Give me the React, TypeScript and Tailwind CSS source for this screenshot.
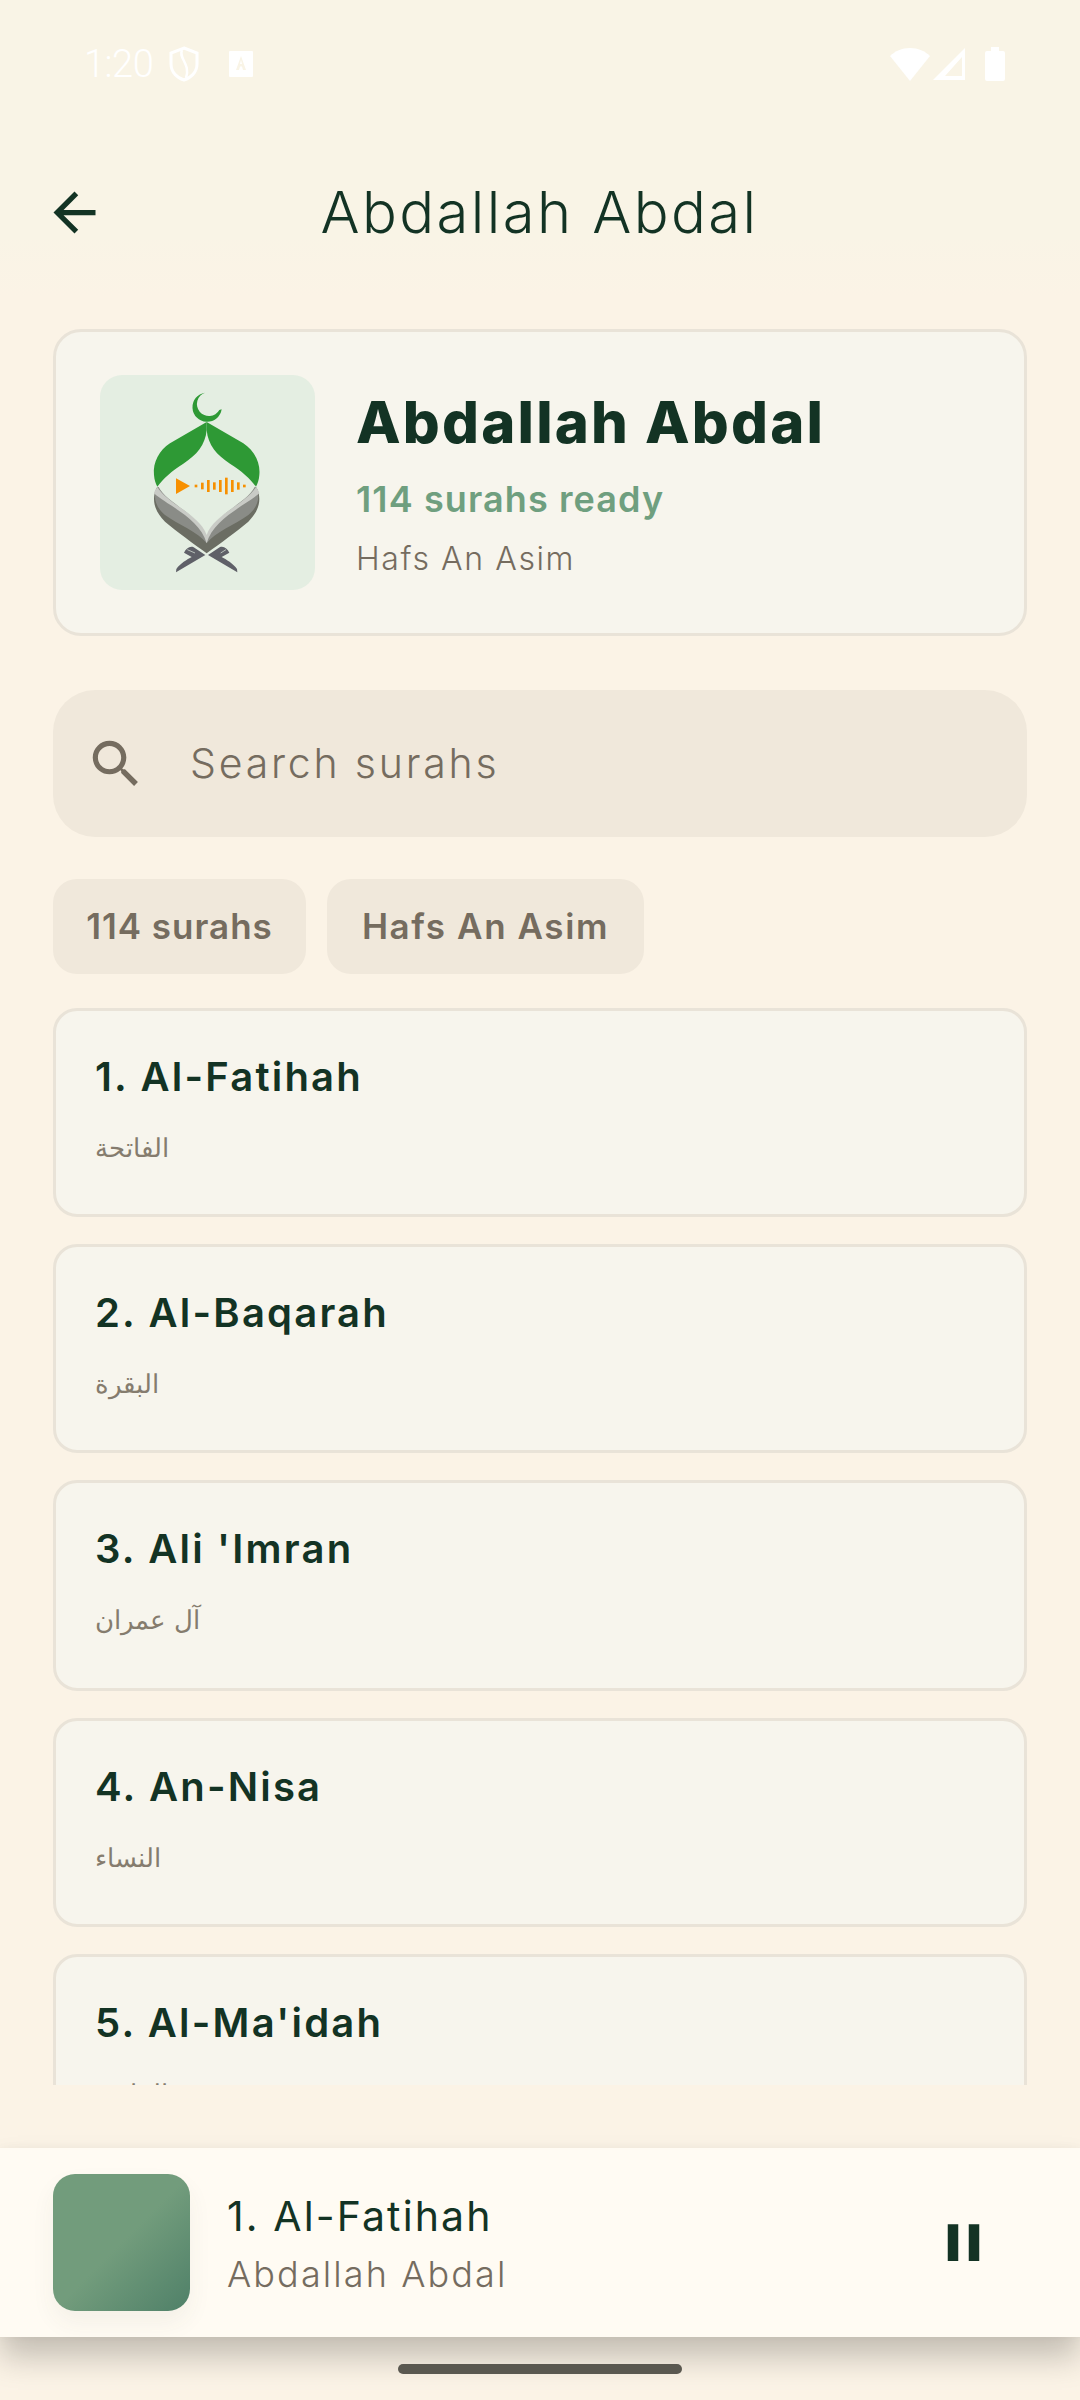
const surahs = [
  { title: "1. Al-Fatihah", arabic: "الفاتحة", height: "h-[209px]" },
  { title: "2. Al-Baqarah", arabic: "البقرة", height: "h-[209px]" },
  { title: "3. Ali 'Imran", arabic: "آل عمران", height: "h-[211px]" },
  { title: "4. An-Nisa", arabic: "النساء", height: "h-[209px]" },
  { title: "5. Al-Ma'idah", arabic: "المائدة", height: "h-[209px]" },
];

function StatusBar() {
  return (
    <div className="flex h-[128px] shrink-0 items-center justify-between pl-[84px] pr-[75px] text-white">
      <div className="flex items-center">
        <span className="w-[85px] font-['Roboto',sans-serif] text-[38px] font-light leading-none tracking-[-0.5px]">1:20</span>
        <svg viewBox="0 0 30 36" className="h-[36px] w-[30px]" fill="none" stroke="white" strokeWidth="3">
          <path d="M15 2 L28 7 V18 C28 26 22 32 15 34 C8 32 2 26 2 18 V7 Z" />
          <path d="M13 4 C9 12 22 18 17 32" strokeWidth="2.5" />
        </svg>
        <svg viewBox="0 0 24 26" className="ml-[30px] h-[26px] w-[24px]">
          <path fill="white" fillRule="evenodd" d="M1 0 H23 A1 1 0 0 1 24 1 V25 A1 1 0 0 1 23 26 H1 A1 1 0 0 1 0 25 V1 A1 1 0 0 1 1 0 Z M12 5 L7 19 H10 L11 15.5 H13 L14 19 H17 Z M12 9 L13 13 H11 Z" />
        </svg>
      </div>
      <div className="flex items-center">
        <svg viewBox="0 0 40 33" className="h-[33px] w-[40px]">
          <path fill="white" d="M20 33 L0 8 C5 3 12 0 20 0 C28 0 35 3 40 8 Z" />
        </svg>
        <svg viewBox="0 0 32 32" className="ml-[3px] h-[32px] w-[32px]" fill="white">
          <path fillRule="evenodd" d="M32 0 V32 H0 Z M29 9 L12 28 H29 Z" />
        </svg>
        <svg viewBox="0 0 20 34" className="ml-[20px] h-[34px] w-[20px]">
          <path fill="white" d="M6 0 H14 V4 H18 A2 2 0 0 1 20 6 V32 A2 2 0 0 1 18 34 H2 A2 2 0 0 1 0 32 V6 A2 2 0 0 1 2 4 H6 Z" />
        </svg>
      </div>
    </div>
  );
}

function Logo() {
  const bars = [
    [288, 8], [307, 20], [325, 36], [343, 22], [361, 36], [379, 50], [397, 36], [415, 22], [433, 8],
  ];
  return (
    <svg viewBox="0 0 645 645" className="h-[215px] w-[215px]">
      <path fill="#6b6d63" d="M170 338 C155 370 160 405 195 440 C230 470 280 505 320 535 C360 505 410 470 445 440 C480 405 485 370 470 338 Z" />
      <path fill="#8a8c87" d="M172 336 C158 365 165 395 195 420 C235 450 295 470 320 505 C345 470 405 450 445 420 C475 395 482 365 468 336 Z" />
      <path fill="#c9cbc6" d="M172 336 C165 346 162 352 162 355 C200 390 300 430 320 505 C340 430 440 390 478 355 C478 352 475 346 468 336 C440 385 340 420 320 475 C300 420 200 385 172 336 Z" />
      <path fill="#e4eee2" d="M176 336 C200 385 300 420 320 480 C340 420 440 385 464 336 L320 300 Z" />
      <path fill="#2e9935" d="M315 53 A44 44 0 1 0 365 103 L358 105 A36 36 0 1 1 315 53 Z" />
      <path fill="#2e9935" d="M320 141 L210 205 C178 226 158 262 162 300 C163 315 167 326 172 335 C190 310 215 288 250 266 C290 240 316 210 320 165 Z" />
      <path fill="#2e9935" d="M320 141 L430 205 C462 226 482 262 478 300 C477 315 473 326 468 335 C450 310 425 288 390 266 C350 240 324 210 320 165 Z" />
      <path fill="#5f6068" d="M316 540 L228 592 L229 582 C240 566 262 553 275 546 L252 533 C258 520 270 512 281 517 Z" />
      <path fill="#5f6068" d="M324 540 L412 592 L411 582 C400 566 378 553 365 546 L388 533 C382 520 370 512 359 517 Z" />
      <path fill="none" stroke="#e4eee2" strokeWidth="2" d="M262 524 L285 534 M362 534 L378 524" />
      <path fill="#f79000" d="M228 310 L270 333 L228 357 Z" />
      {bars.map(([x, h]) => (
        <rect key={x} x={x - 4} y={333 - h / 2} width="8" height={h} fill="#f79000" />
      ))}
    </svg>
  );
}

export default function App() {
  return (
    <div className="flex h-[2400px] w-[1080px] flex-col overflow-hidden bg-[#fbf3e6] font-['Inter',sans-serif]">
      <div className="flex shrink-0 flex-col bg-[linear-gradient(180deg,#f9f4e6_80%,#fbf3e6_100%)]">
        <StatusBar />

        <div className="flex h-[168px] shrink-0 items-center pl-[43px] pr-[107px]">
          <svg viewBox="0 0 24 24" className="h-[63px] w-[63px]" fill="#133324">
            <path d="M20 11H7.83l5.59-5.59L12 4l-8 8 8 8 1.41-1.41L7.83 13H20v-2z" />
          </svg>
          <h1 className="flex-1 text-center text-[58px] font-light leading-none tracking-[2.4px] text-[#133324]">Abdallah Abdal</h1>
        </div>
      </div>

      <div className="flex flex-col px-[53px] pt-[33px]">
        <div className="flex h-[307px] items-center gap-[41px] rounded-[28px] border-[3px] border-[#e9e3d8] bg-[#f7f5ed] pl-[44px]">
          <div className="flex h-[215px] w-[215px] items-center justify-center rounded-[22px] bg-[#e4eee2]">
            <Logo />
          </div>
          <div className="flex flex-col">
            <div className="text-[58px] font-extrabold leading-[70px] tracking-[2.2px] text-[#133324]">Abdallah Abdal</div>
            <div className="mt-[20px] text-[36px] font-semibold leading-[44px] tracking-[1.1px] text-[#6f9f7f]">114 surahs ready</div>
            <div className="mt-[18px] text-[32px] font-light leading-[40px] tracking-[1.6px] text-[#756c5f]">Hafs An Asim</div>
          </div>
        </div>

        <div className="mt-[54px] flex h-[147px] items-center gap-[43px] rounded-[42px] bg-[#f0e8db] pl-[32px]">
          <svg viewBox="0 0 24 24" className="h-[62px] w-[62px]" fill="#756c5f">
            <path d="M15.5 14h-.79l-.28-.27C15.41 12.59 16 11.11 16 9.5 16 5.91 13.09 3 9.5 3S3 5.91 3 9.5 5.91 16 9.5 16c1.61 0 3.09-.59 4.23-1.57l.27.28v.79l5 4.99L20.49 19l-4.99-5zm-6 0C7.01 14 5 11.99 5 9.5S7.01 5 9.5 5 14 7.01 14 9.5 11.99 14 9.5 14z" />
          </svg>
          <span className="text-[41px] font-light leading-none tracking-[2.8px] text-[#756c5f]">Search surahs</span>
        </div>

        <div className="mt-[42px] flex gap-[21px]">
          <div className="flex h-[95px] w-[253px] items-center justify-center rounded-[24px] bg-[#f0e8db] text-[35px] font-semibold tracking-[1px] text-[#756c5f]">114 surahs</div>
          <div className="flex h-[95px] w-[317px] items-center justify-center rounded-[24px] bg-[#f0e8db] text-[35px] font-semibold tracking-[1.6px] text-[#756c5f]">Hafs An Asim</div>
        </div>

        <div className="mt-[34px] flex h-[1077px] flex-col gap-[27px] overflow-hidden">
          {surahs.map((s) => (
            <div key={s.title} className={`flex ${s.height} shrink-0 flex-col rounded-[24px] border-[3px] border-[#e9e3d8] bg-[#f7f5ed] pl-[39px] pt-[40px]`}>
              <div className="text-[40px] font-semibold leading-[52px] tracking-[2.2px] text-[#133324]">{s.title}</div>
              <div dir="rtl" className="mt-[23px] self-start font-['DejaVu_Sans',serif] text-[26px] font-light leading-[44px] text-[#857c6e]">{s.arabic}</div>
            </div>
          ))}
        </div>
      </div>

      <div className="mt-[63px] flex h-[189px] shrink-0 items-center bg-[#fffbf3] pl-[53px] pr-[85px] shadow-[0_20px_30px_rgba(0,0,0,0.22),0_0_10px_rgba(0,0,0,0.03)]">
        <div className="h-[137px] w-[137px] rounded-[22px] bg-[linear-gradient(135deg,#729c7c_50%,#4f8068_100%)] shadow-[0_12px_24px_rgba(70,65,45,0.06)]" />
        <div className="ml-[37px] flex flex-1 flex-col">
          <div className="mt-[1px] text-[41px] font-normal leading-[52px] tracking-[2.1px] text-[#133324]">1. Al-Fatihah</div>
          <div className="mt-[10px] text-[36px] font-light leading-[44px] tracking-[2.1px] text-[#756c5f]">Abdallah Abdal</div>
        </div>
        <svg viewBox="0 0 24 24" className="h-[63px] w-[63px]" fill="#133324">
          <path d="M6 19h4V5H6v14zm8-14v14h4V5h-4z" />
        </svg>
      </div>

      <div className="relative mx-auto mt-[27px] h-[10px] w-[284px] rounded-full bg-[#5a5850]" />
    </div>
  );
}
